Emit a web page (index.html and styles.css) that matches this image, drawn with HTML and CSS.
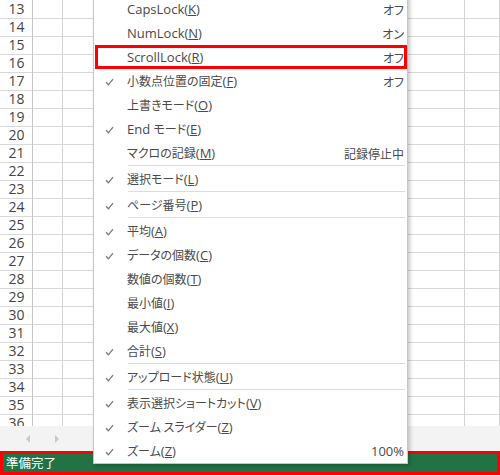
FILE: index.html
```html
<!DOCTYPE html>
<html lang="ja">
<head>
<meta charset="utf-8">
<link rel="stylesheet" href="styles.css">
</head>
<body>
<div class="app">
  <div class="grid">
    <div class="row"><div class="hd">13</div><div class="c"></div><div class="c"></div><div class="c"></div></div>
    <div class="row"><div class="hd">14</div><div class="c"></div><div class="c"></div><div class="c"></div></div>
    <div class="row"><div class="hd">15</div><div class="c"></div><div class="c"></div><div class="c"></div></div>
    <div class="row"><div class="hd">16</div><div class="c"></div><div class="c"></div><div class="c"></div></div>
    <div class="row"><div class="hd">17</div><div class="c"></div><div class="c"></div><div class="c"></div></div>
    <div class="row"><div class="hd">18</div><div class="c"></div><div class="c"></div><div class="c"></div></div>
    <div class="row"><div class="hd">19</div><div class="c"></div><div class="c"></div><div class="c"></div></div>
    <div class="row"><div class="hd">20</div><div class="c"></div><div class="c"></div><div class="c"></div></div>
    <div class="row"><div class="hd">21</div><div class="c"></div><div class="c"></div><div class="c"></div></div>
    <div class="row"><div class="hd">22</div><div class="c"></div><div class="c"></div><div class="c"></div></div>
    <div class="row"><div class="hd">23</div><div class="c"></div><div class="c"></div><div class="c"></div></div>
    <div class="row"><div class="hd">24</div><div class="c"></div><div class="c"></div><div class="c"></div></div>
    <div class="row"><div class="hd">25</div><div class="c"></div><div class="c"></div><div class="c"></div></div>
    <div class="row"><div class="hd">26</div><div class="c"></div><div class="c"></div><div class="c"></div></div>
    <div class="row"><div class="hd">27</div><div class="c"></div><div class="c"></div><div class="c"></div></div>
    <div class="row"><div class="hd">28</div><div class="c"></div><div class="c"></div><div class="c"></div></div>
    <div class="row"><div class="hd">29</div><div class="c"></div><div class="c"></div><div class="c"></div></div>
    <div class="row"><div class="hd">30</div><div class="c"></div><div class="c"></div><div class="c"></div></div>
    <div class="row"><div class="hd">31</div><div class="c"></div><div class="c"></div><div class="c"></div></div>
    <div class="row"><div class="hd">32</div><div class="c"></div><div class="c"></div><div class="c"></div></div>
    <div class="row"><div class="hd">33</div><div class="c"></div><div class="c"></div><div class="c"></div></div>
    <div class="row"><div class="hd">34</div><div class="c"></div><div class="c"></div><div class="c"></div></div>
    <div class="row"><div class="hd">35</div><div class="c"></div><div class="c"></div><div class="c"></div></div>
    <div class="row"><div class="hd">36</div><div class="c"></div><div class="c"></div><div class="c"></div></div>
  </div>
  <div class="tabs">
    <span class="arr arr-l"></span>
    <span class="arr arr-r"></span>
  </div>
  <div class="status"><span class="status-text">準備完了</span></div>

  <div class="menu">
    <div class="item"><span class="chk"></span><span class="label"><span class="l">CapsLock(<u>K</u>)</span></span><span class="val">オフ</span></div>
    <div class="item"><span class="chk"></span><span class="label"><span class="l">NumLock(<u>N</u>)</span></span><span class="val">オン</span></div>
    <div class="item hl"><span class="chk"></span><span class="label"><span class="l">ScrollLock(<u>R</u>)</span></span><span class="val">オフ</span></div>
    <div class="item"><span class="chk"><svg viewBox="0 0 9 8"><path d="M1 4.3 L3.4 6.8 L8 1.2"/></svg></span><span class="label">小数点位置の固定<span class="l">(<u>F</u>)</span></span><span class="val">オフ</span></div>
    <div class="item"><span class="chk"></span><span class="label">上書きモード<span class="l">(<u>O</u>)</span></span></div>
    <div class="item"><span class="chk"><svg viewBox="0 0 9 8"><path d="M1 4.3 L3.4 6.8 L8 1.2"/></svg></span><span class="label"><span class="l">End </span>モード<span class="l">(<u>E</u>)</span></span></div>
    <div class="item"><span class="chk"></span><span class="label">マクロの記録<span class="l">(<u>M</u>)</span></span><span class="val">記録停止中</span></div>
    <div class="sep"></div>
    <div class="item"><span class="chk"><svg viewBox="0 0 9 8"><path d="M1 4.3 L3.4 6.8 L8 1.2"/></svg></span><span class="label">選択モード<span class="l">(<u>L</u>)</span></span></div>
    <div class="sep"></div>
    <div class="item"><span class="chk"><svg viewBox="0 0 9 8"><path d="M1 4.3 L3.4 6.8 L8 1.2"/></svg></span><span class="label">ページ番号<span class="l">(<u>P</u>)</span></span></div>
    <div class="sep"></div>
    <div class="item"><span class="chk"><svg viewBox="0 0 9 8"><path d="M1 4.3 L3.4 6.8 L8 1.2"/></svg></span><span class="label">平均<span class="l">(<u>A</u>)</span></span></div>
    <div class="item"><span class="chk"><svg viewBox="0 0 9 8"><path d="M1 4.3 L3.4 6.8 L8 1.2"/></svg></span><span class="label">データの個数<span class="l">(<u>C</u>)</span></span></div>
    <div class="item"><span class="chk"></span><span class="label">数値の個数<span class="l">(<u>T</u>)</span></span></div>
    <div class="item"><span class="chk"></span><span class="label">最小値<span class="l">(<u>I</u>)</span></span></div>
    <div class="item"><span class="chk"></span><span class="label">最大値<span class="l">(<u>X</u>)</span></span></div>
    <div class="item"><span class="chk"><svg viewBox="0 0 9 8"><path d="M1 4.3 L3.4 6.8 L8 1.2"/></svg></span><span class="label">合計<span class="l">(<u>S</u>)</span></span></div>
    <div class="sep"></div>
    <div class="item"><span class="chk"><svg viewBox="0 0 9 8"><path d="M1 4.3 L3.4 6.8 L8 1.2"/></svg></span><span class="label">アップロード状態<span class="l">(<u>U</u>)</span></span></div>
    <div class="sep"></div>
    <div class="item"><span class="chk"><svg viewBox="0 0 9 8"><path d="M1 4.3 L3.4 6.8 L8 1.2"/></svg></span><span class="label">表示選択ショートカット<span class="l">(<u>V</u>)</span></span></div>
    <div class="item"><span class="chk"><svg viewBox="0 0 9 8"><path d="M1 4.3 L3.4 6.8 L8 1.2"/></svg></span><span class="label">ズーム スライダー<span class="l">(<u>Z</u>)</span></span></div>
    <div class="item"><span class="chk"><svg viewBox="0 0 9 8"><path d="M1 4.3 L3.4 6.8 L8 1.2"/></svg></span><span class="label">ズーム<span class="l">(<u>Z</u>)</span></span><span class="val"><span class="l">100%</span></span></div>
  </div>
</div>
</body>
</html>
```

FILE: styles.css
```css
* { box-sizing: border-box; }

html, body {
  margin: 0;
  padding: 0;
  width: 500px;
  height: 475px;
  overflow: hidden;
  background: #ffffff;
}

.app {
  position: relative;
  width: 500px;
  height: 475px;
  display: flex;
  flex-direction: column;
  font-family: "Noto Sans CJK JP", "Open Sans", sans-serif;
}

.grid {
  height: 426px;
  overflow: hidden;
  flex: none;
}

.row {
  display: grid;
  grid-template-columns: 33px 30px 402px 1fr;
  height: 18px;
}

.hd, .c {
  border-right: 1px solid #d4d4d4;
  border-bottom: 1px solid #d9d9d9;
}

.hd {
  border-right-color: #c6c6c6;
  font-family: "Open Sans", "Noto Sans", sans-serif;
  font-size: 14px;
  line-height: 18px;
  color: #444444;
  text-align: center;
  padding-left: 1px;
}

.tabs {
  height: 25px;
  flex: none;
  background: #f3f3f3;
  display: flex;
  align-items: center;
  padding-left: 26px;
  gap: 25px;
}

.arr {
  width: 0;
  height: 0;
  border-top: 4px solid transparent;
  border-bottom: 4px solid transparent;
}

.arr-l { border-right: 4px solid #c8c8c8; }
.arr-r { border-left: 4px solid #c8c8c8; }

.status {
  height: 24px;
  flex: none;
  background: #217346;
  border: 3px solid #ff0000;
  display: flex;
  align-items: center;
  padding-left: 3px;
}

.status-text {
  color: #ffffff;
  font-size: 12.5px;
  line-height: 16px;
}

/* context menu overlay */
.menu {
  position: absolute;
  left: 93px;
  top: -4px;
  width: 315px;
  background: #ffffff;
  border: 1px solid #c6c6c6;
  box-shadow: 2px 2px 4px rgba(0, 0, 0, 0.22);
  color: #4a4a4a;
  font-size: 12px;
  font-feature-settings: "palt";
}

.item {
  position: relative;
  height: 24px;
  display: flex;
  align-items: center;
  padding-left: 11px;
  padding-right: 3px;
  white-space: nowrap;
}

.chk {
  width: 22px;
  flex: none;
  display: flex;
  align-items: center;
}

.chk svg {
  width: 9px;
  height: 8px;
  margin-top: 2px;
}

.chk path {
  fill: none;
  stroke: #7a7a7a;
  stroke-width: 1.3;
}

.label {
  flex: 1;
}

.val {
  flex: none;
}

.l {
  font-family: "Open Sans", "Noto Sans", sans-serif;
  font-size: 13px;
}

u {
  text-underline-offset: 1px;
}

.sep {
  height: 2px;
  margin-left: 34px;
  margin-right: 2px;
  border-top: 1px solid #dcdcdc;
}

.hl::after {
  content: "";
  position: absolute;
  top: 0;
  bottom: 0;
  left: 1px;
  right: 0;
  border: 3px solid #ff0000;
}
```
